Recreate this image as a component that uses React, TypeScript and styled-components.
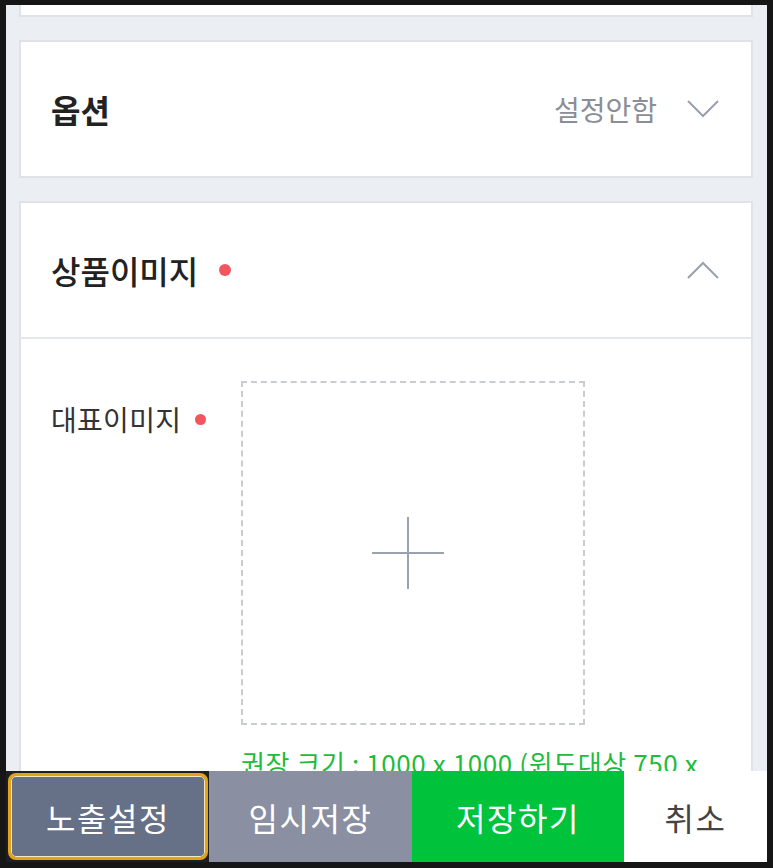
import React from "react";
import styled, { createGlobalStyle } from "styled-components";

const Global = createGlobalStyle`
  html, body {
    margin: 0;
    padding: 0;
    background: #161616;
  }
  body {
    padding: 5px 6px 6px 6px;
    font-family: "Noto Sans CJK KR", "Noto Sans", sans-serif;
  }
  * { box-sizing: border-box; }
`;

const Screen = styled.div`
  height: 857px;
  background: #ebeef3;
  padding: 0 14px 0 13px;
  overflow: hidden;
  display: flex;
  flex-direction: column;
  gap: 23px;
`;

const Card = styled.section<{ $cut?: boolean }>`
  background: #fff;
  border: 2px solid #dfe2e7;
  ${(p) => (p.$cut ? "border-top: none; height: 12px; flex: none;" : "")}
`;

const CardHeader = styled.div<{ $divider?: boolean }>`
  height: ${(p) => (p.$divider ? "136px" : "134px")};
  display: flex;
  align-items: center;
  justify-content: space-between;
  padding: 0 32px 0 30px;
  border-bottom: ${(p) => (p.$divider ? "2px solid #e4e8ed" : "none")};
`;

const Title = styled.h2<{ $weight: number }>`
  margin: 0;
  font-size: 32px;
  font-weight: ${(p) => p.$weight};
  color: #222;
  display: flex;
  align-items: center;
  gap: 21px;
`;

const Dot = styled.span<{ $size: number }>`
  display: inline-block;
  flex: none;
  width: ${(p) => p.$size}px;
  height: ${(p) => p.$size}px;
  border-radius: 50%;
  background: #f2555d;
`;

const Right = styled.div`
  display: flex;
  align-items: center;
  gap: 30px;
  font-size: 28px;
  color: #8a8e96;
`;

const Chevron = ({ up }: { up?: boolean }) => (
  <svg width="32" height="18" viewBox="0 0 32 18" fill="none">
    <polyline
      points={up ? "1,17 16,2 31,17" : "1,1 16,16 31,1"}
      stroke="#9aa0ab"
      strokeWidth="2"
    />
  </svg>
);

const CardBody = styled.div`
  padding: 42px 30px 0 30px;
  display: grid;
  grid-template-columns: 190px 1fr;
  min-height: 560px;
`;

const Label = styled.div`
  margin-top: 18px;
  font-size: 28px;
  color: #333;
  display: flex;
  align-items: flex-start;
  gap: 14px;
  line-height: 40px;
  letter-spacing: 0.3px;
  & > span:last-child {
    margin-top: 15px;
  }
`;

const Uploader = styled.div`
  display: flex;
  flex-direction: column;
`;

const DropBox = styled.div`
  width: 344px;
  height: 344px;
  border: 2px dashed #c9ccd1;
  display: flex;
  align-items: center;
  justify-content: center;
  padding-right: 10px;
`;

const Hint = styled.p`
  margin: 20px 0 0 0;
  font-size: 26px;
  letter-spacing: 0.6px;
  line-height: 36px;
  color: #1fbb3a;
`;

const BottomBar = styled.nav`
  position: fixed;
  left: 6px;
  right: 6px;
  bottom: 6px;
  height: 91px;
  display: grid;
  grid-template-columns: 203px 203px 212px 1fr;
  background: #1e1f22;
`;

const BarButton = styled.button<{ $bg: string; $fg: string; $focus?: boolean }>`
  border: none;
  margin: 0;
  font-family: "Noto Sans CJK KR", "Noto Sans", sans-serif;
  font-size: 32px;
  letter-spacing: 1.5px;
  background: ${(p) => p.$bg};
  color: ${(p) => p.$fg};
  ${(p) =>
    p.$focus
      ? `
    margin: 2px 1px 2px 2px;
    border: 3px solid #e3a21c;
    border-radius: 8px;
    box-shadow: 0 0 0 1px #f6e7c0 inset;
  `
      : ""}
`;

export default function App() {
  return (
    <>
      <Global />
      <Screen>
        <Card $cut />
        <Card>
          <CardHeader>
            <Title $weight={700}>옵션</Title>
            <Right>
              <span>설정안함</span>
              <Chevron />
            </Right>
          </CardHeader>
        </Card>
        <Card>
          <CardHeader $divider>
            <Title $weight={500}>
              상품이미지 <Dot $size={12} />
            </Title>
            <Chevron up />
          </CardHeader>
          <CardBody>
            <Label>
              <span>대표이미지</span>
              <Dot $size={11} />
            </Label>
            <Uploader>
              <DropBox>
                <svg width="72" height="72" viewBox="0 0 72 72">
                  <line x1="0" y1="36" x2="72" y2="36" stroke="#9aa1b1" strokeWidth="2" />
                  <line x1="36" y1="0" x2="36" y2="72" stroke="#9aa1b1" strokeWidth="2" />
                </svg>
              </DropBox>
              <Hint>권장 크기 : 1000 x 1000 (윈도대상 750 x 1000)</Hint>
            </Uploader>
          </CardBody>
        </Card>
      </Screen>
      <BottomBar>
        <BarButton $bg="#667086" $fg="#fff" $focus>노출설정</BarButton>
        <BarButton $bg="#8a90a2" $fg="#fff">임시저장</BarButton>
        <BarButton $bg="#00c33c" $fg="#fff">저장하기</BarButton>
        <BarButton $bg="#fff" $fg="#444">취소</BarButton>
      </BottomBar>
    </>
  );
}
